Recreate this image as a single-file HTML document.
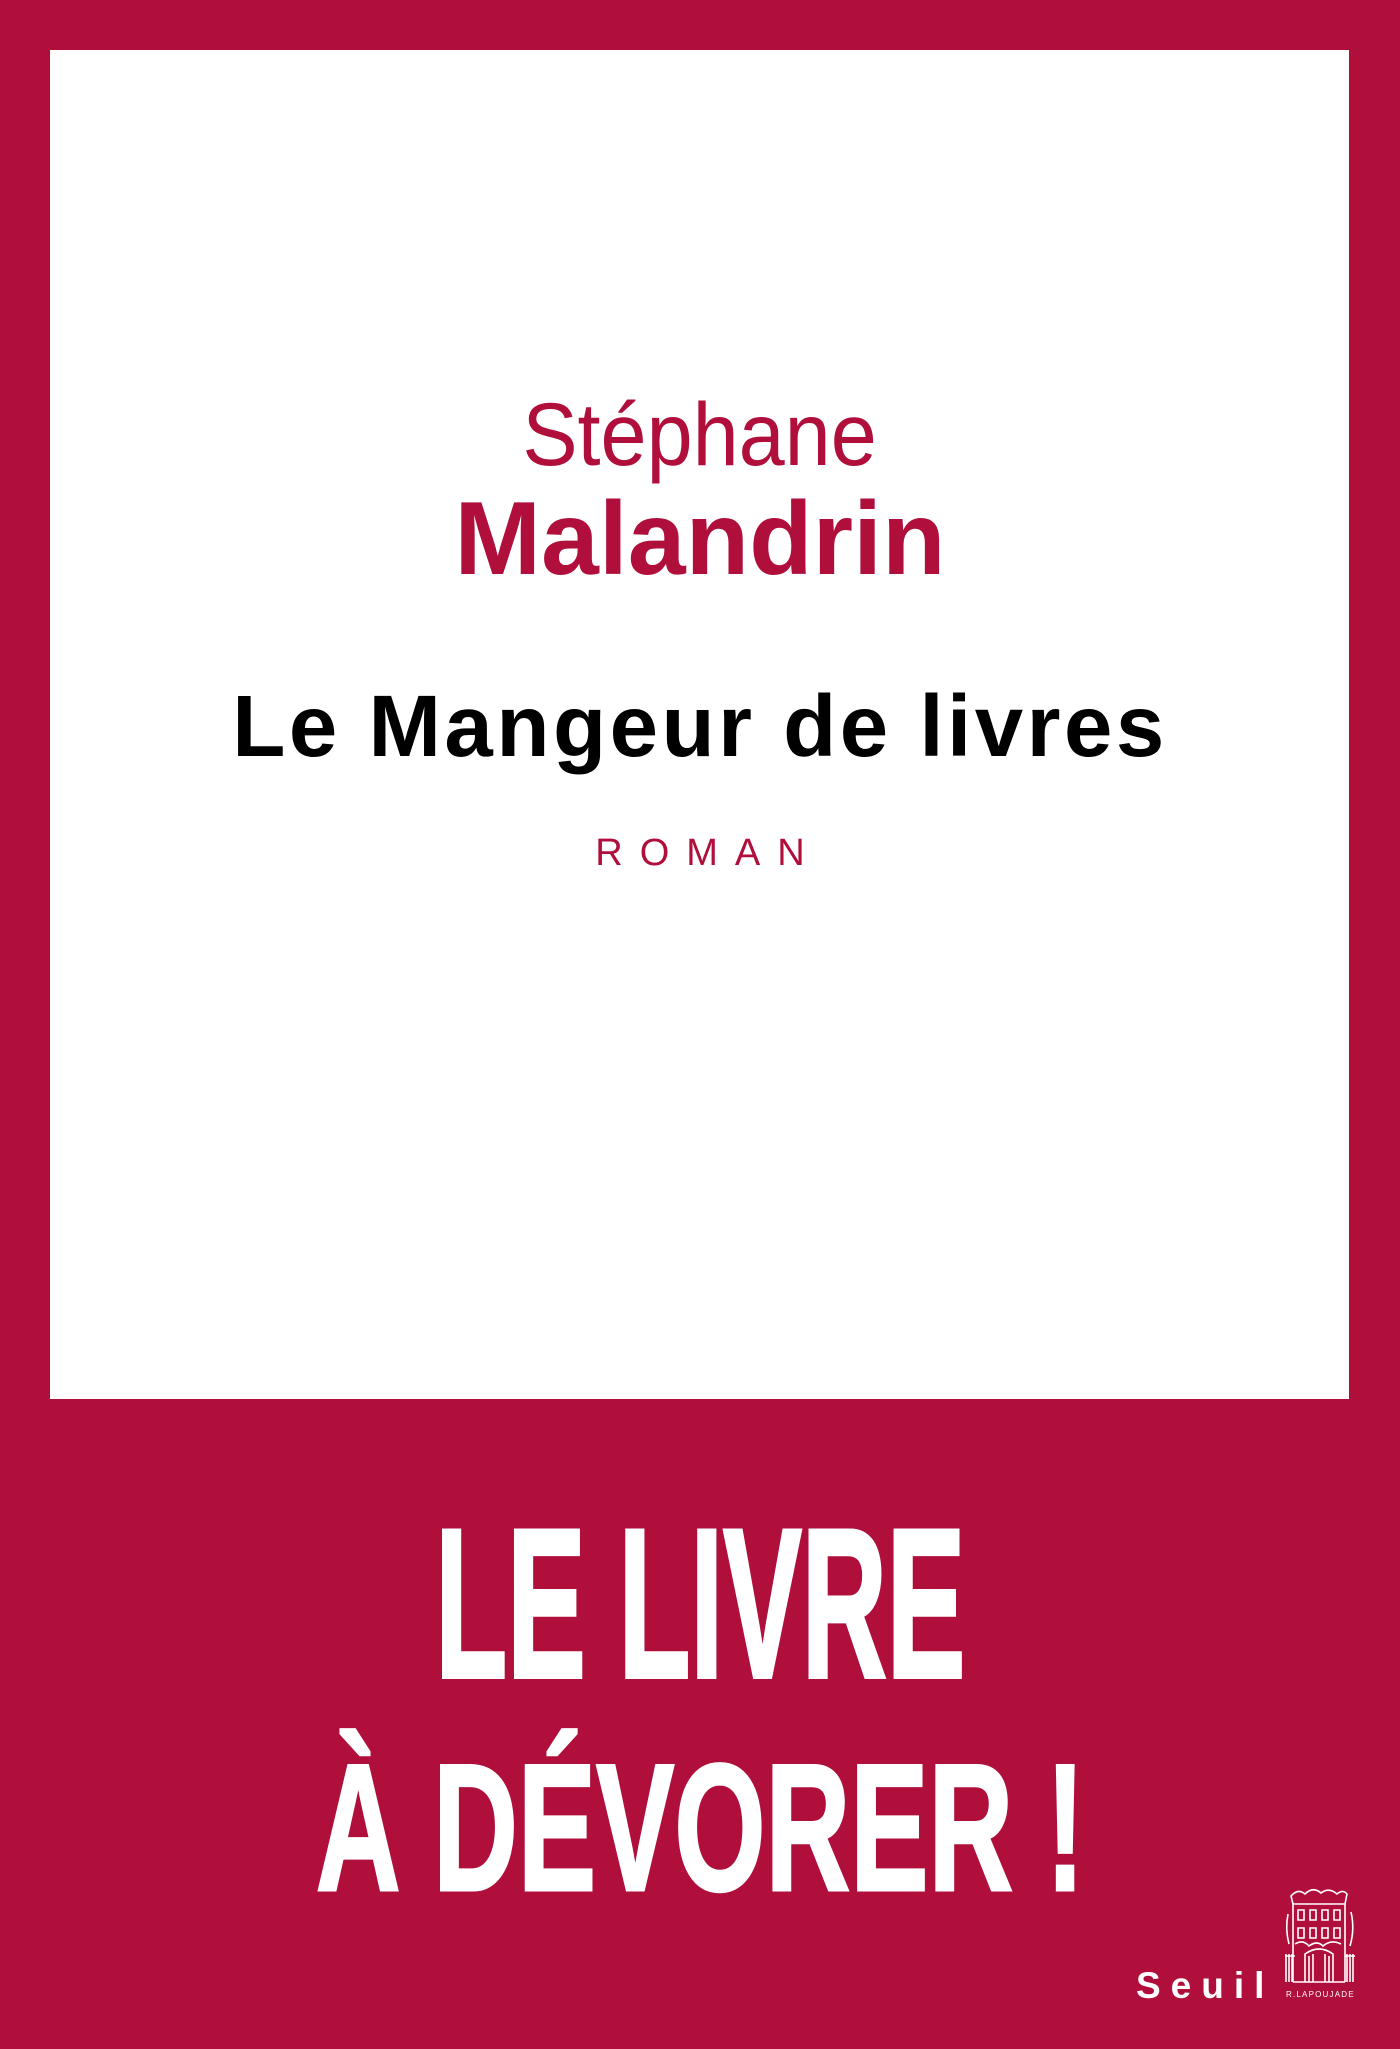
<!DOCTYPE html>
<html><head><meta charset="utf-8">
<style>
html,body{margin:0;padding:0}
body{width:1400px;height:2049px;background:#B00F3C;position:relative;overflow:hidden;font-family:"Liberation Sans",Arial,sans-serif}
.white{position:absolute;left:50px;top:50px;width:1299px;height:1349px;background:#fff}
.line{position:absolute;left:0;width:1400px;text-align:center;line-height:1;white-space:nowrap}
.sc{display:inline-block}
</style></head><body>
<div class="white"></div>
<div class="line" style="top:390px;font-size:89px;color:#B00F3C;"><span class="sc" style="transform:scaleX(0.93);font-weight:400;">Stéphane</span></div>
<div class="line" style="top:487px;font-size:104px;color:#B00F3C;font-weight:bold;">Malandrin</div>
<div class="line" style="top:683px;font-size:87px;color:#000;font-weight:bold;letter-spacing:3.5px;">Le Mangeur de livres</div>
<div class="line" style="top:834px;font-size:38px;color:#B00F3C;letter-spacing:17px;padding-left:17px;box-sizing:border-box;">ROMAN</div>
<div class="line" style="top:1498px;font-size:213px;color:#fff;font-weight:bold;"><span class="sc" style="transform:scaleX(0.553);-webkit-text-stroke:4px #fff">LE LIVRE</span></div>
<div class="line" style="top:1738px;font-size:181px;color:#fff;font-weight:bold;"><span class="sc" style="transform:scaleX(0.648);-webkit-text-stroke:3px #fff">À DÉVORER !</span></div>
<div style="position:absolute;left:1136px;top:1967px;font-size:37px;line-height:1;color:#fff;font-weight:bold;letter-spacing:10px;">Seuil</div>
<svg style="position:absolute;left:1283px;top:1884px" width="75" height="120" viewBox="0 0 75 120" fill="none" stroke="#fff" stroke-width="1.6">
<path d="M8 12 Q15 4 22 10 Q30 2 38 9 Q46 3 54 10 Q60 5 64 10 L62 20 L10 20 Z"/>
<path d="M10 20 L10 98 M62 20 L62 98 M10 98 L62 98"/>
<path d="M15 26h6v10h-6z M27 26h6v10h-6z M39 26h6v10h-6z M51 26h6v10h-6z"/>
<path d="M15 44h6v10h-6z M27 44h6v10h-6z M39 44h6v10h-6z M51 44h6v10h-6z"/>
<path d="M12 60 Q20 55 26 62 Q34 56 40 62 Q48 55 58 60"/>
<path d="M22 98 L22 70 Q36 60 50 70 L50 98 M26 72v26 M30 70v28 M42 70v28 M46 72v26"/>
<path d="M3 70v28 M6 70v28 M9 70v28 M2 72h10 M64 70v28 M67 70v28 M70 70v28 M62 72h10"/>
<path d="M5 30 Q2 45 6 60 M68 28 Q72 45 67 62"/>
</svg>
<div style="position:absolute;left:1286px;top:1991px;font-size:8px;line-height:1;color:#fff;letter-spacing:1.2px;">R.LAPOUJADE</div>
</body></html>
